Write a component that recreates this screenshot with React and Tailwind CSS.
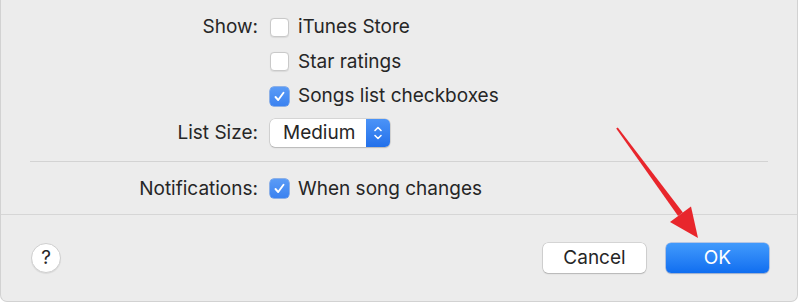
import React from 'react';

function Checkbox({ checked }) {
  if (checked) {
    return (
      <div className="flex h-[19px] w-[19px] shrink-0 items-center justify-center rounded-[4px] bg-gradient-to-b from-[#5a9bf6] to-[#3b82f0] shadow-[0_0_0_0.5px_#2f74e0]">
        <svg width="13" height="13" viewBox="0 0 13 13" fill="none">
          <path d="M2.5 7 L5.2 10 L10.5 2.8" stroke="white" strokeWidth="1.9" strokeLinecap="round" strokeLinejoin="round" />
        </svg>
      </div>
    );
  }
  return (
    <div className="h-[19px] w-[19px] shrink-0 rounded-[4px] border border-[#c9c9c9] bg-white shadow-[0_0.5px_1px_rgba(0,0,0,0.08)]" />
  );
}

function Row({ label, children, className }) {
  return (
    <div className={'grid grid-cols-[228px_1fr] items-center gap-x-[12px] ' + className}>
      <div className="text-right">{label}</div>
      <div className="flex items-center">{children}</div>
    </div>
  );
}

function Option({ checked, text }) {
  return (
    <div className="flex items-center gap-[9px]">
      <Checkbox checked={checked} />
      <span>{text}</span>
    </div>
  );
}

export default function App() {
  return (
    <div className="relative h-[303px] w-[800px] overflow-hidden bg-white font-['Inter',sans-serif] text-[19px] leading-[24px] text-[#262626]">
      <div className="flex h-[302px] w-[798px] flex-col rounded-b-[7px] border-x border-b border-[#d2d2d2] bg-[#ececec]">
        <div className="border-b border-[#d6d6d6] pt-[10px]">
          <div className="px-[29px]">
            <Row label="Show:" className="h-[34px]">
              <Option text="iTunes Store" />
            </Row>
            <Row label="" className="h-[35px]">
              <Option text="Star ratings" />
            </Row>
            <Row label="" className="h-[34px]">
              <Option checked text="Songs list checkboxes" />
            </Row>
            <Row label="List Size:" className="h-[40px]">
              <div className="flex h-[28px] w-[120px] overflow-hidden rounded-[5px] bg-white shadow-[0_0_0_0.5px_rgba(0,0,0,0.18),0_1px_1.5px_rgba(0,0,0,0.15)]">
                <div className="flex flex-1 items-center pl-[13px]">Medium</div>
                <div className="flex w-[24px] items-center justify-center bg-gradient-to-b from-[#4b93f7] to-[#2270ea]">
                  <svg width="10" height="18" viewBox="0 0 10 18" fill="none">
                    <path d="M2 6.5 L5 3.5 L8 6.5" stroke="white" strokeWidth="1.6" strokeLinecap="round" strokeLinejoin="round" />
                    <path d="M2 11.5 L5 14.5 L8 11.5" stroke="white" strokeWidth="1.6" strokeLinecap="round" strokeLinejoin="round" />
                  </svg>
                </div>
              </div>
            </Row>
          </div>
          <div className="mx-[29px] mt-[8px] border-t border-[#d3d3d3]" />
          <div className="px-[29px]">
            <Row label="Notifications:" className="h-[52px] pt-[1px]">
              <Option checked text="When song changes" />
            </Row>
          </div>
        </div>
        <div className="flex flex-1 items-center pl-[30px] pr-[28px]">
          <div className="flex h-[30px] w-[30px] items-center justify-center rounded-full border border-[#cfcfcf] bg-white text-[19px] shadow-[0_1px_1px_rgba(0,0,0,0.08)]">
            ?
          </div>
          <div className="ml-auto flex gap-[20px]">
            <button className="h-[30px] w-[103px] rounded-[5px] bg-white text-[19px] text-[#262626] shadow-[0_0_0_0.5px_rgba(0,0,0,0.2),0_1px_1.5px_rgba(0,0,0,0.15)]">
              Cancel
            </button>
            <button className="h-[30px] w-[103px] rounded-[5px] bg-gradient-to-b from-[#419afc] to-[#0f6ef0] text-[19px] text-white shadow-[0_0_0_0.5px_rgba(20,90,210,0.5),0_1px_1.5px_rgba(0,0,0,0.15)]">
              OK
            </button>
          </div>
        </div>
      </div>
      <svg className="pointer-events-none absolute left-0 top-0" width="800" height="303" viewBox="0 0 800 303">
        <polygon points="617.8,127.4 616.2,128.6 678.1,216.1 682.9,212.5" fill="#e8262c" />
        <polygon points="670,222 691,206.6 698,238" fill="#e8262c" />
      </svg>
    </div>
  );
}
